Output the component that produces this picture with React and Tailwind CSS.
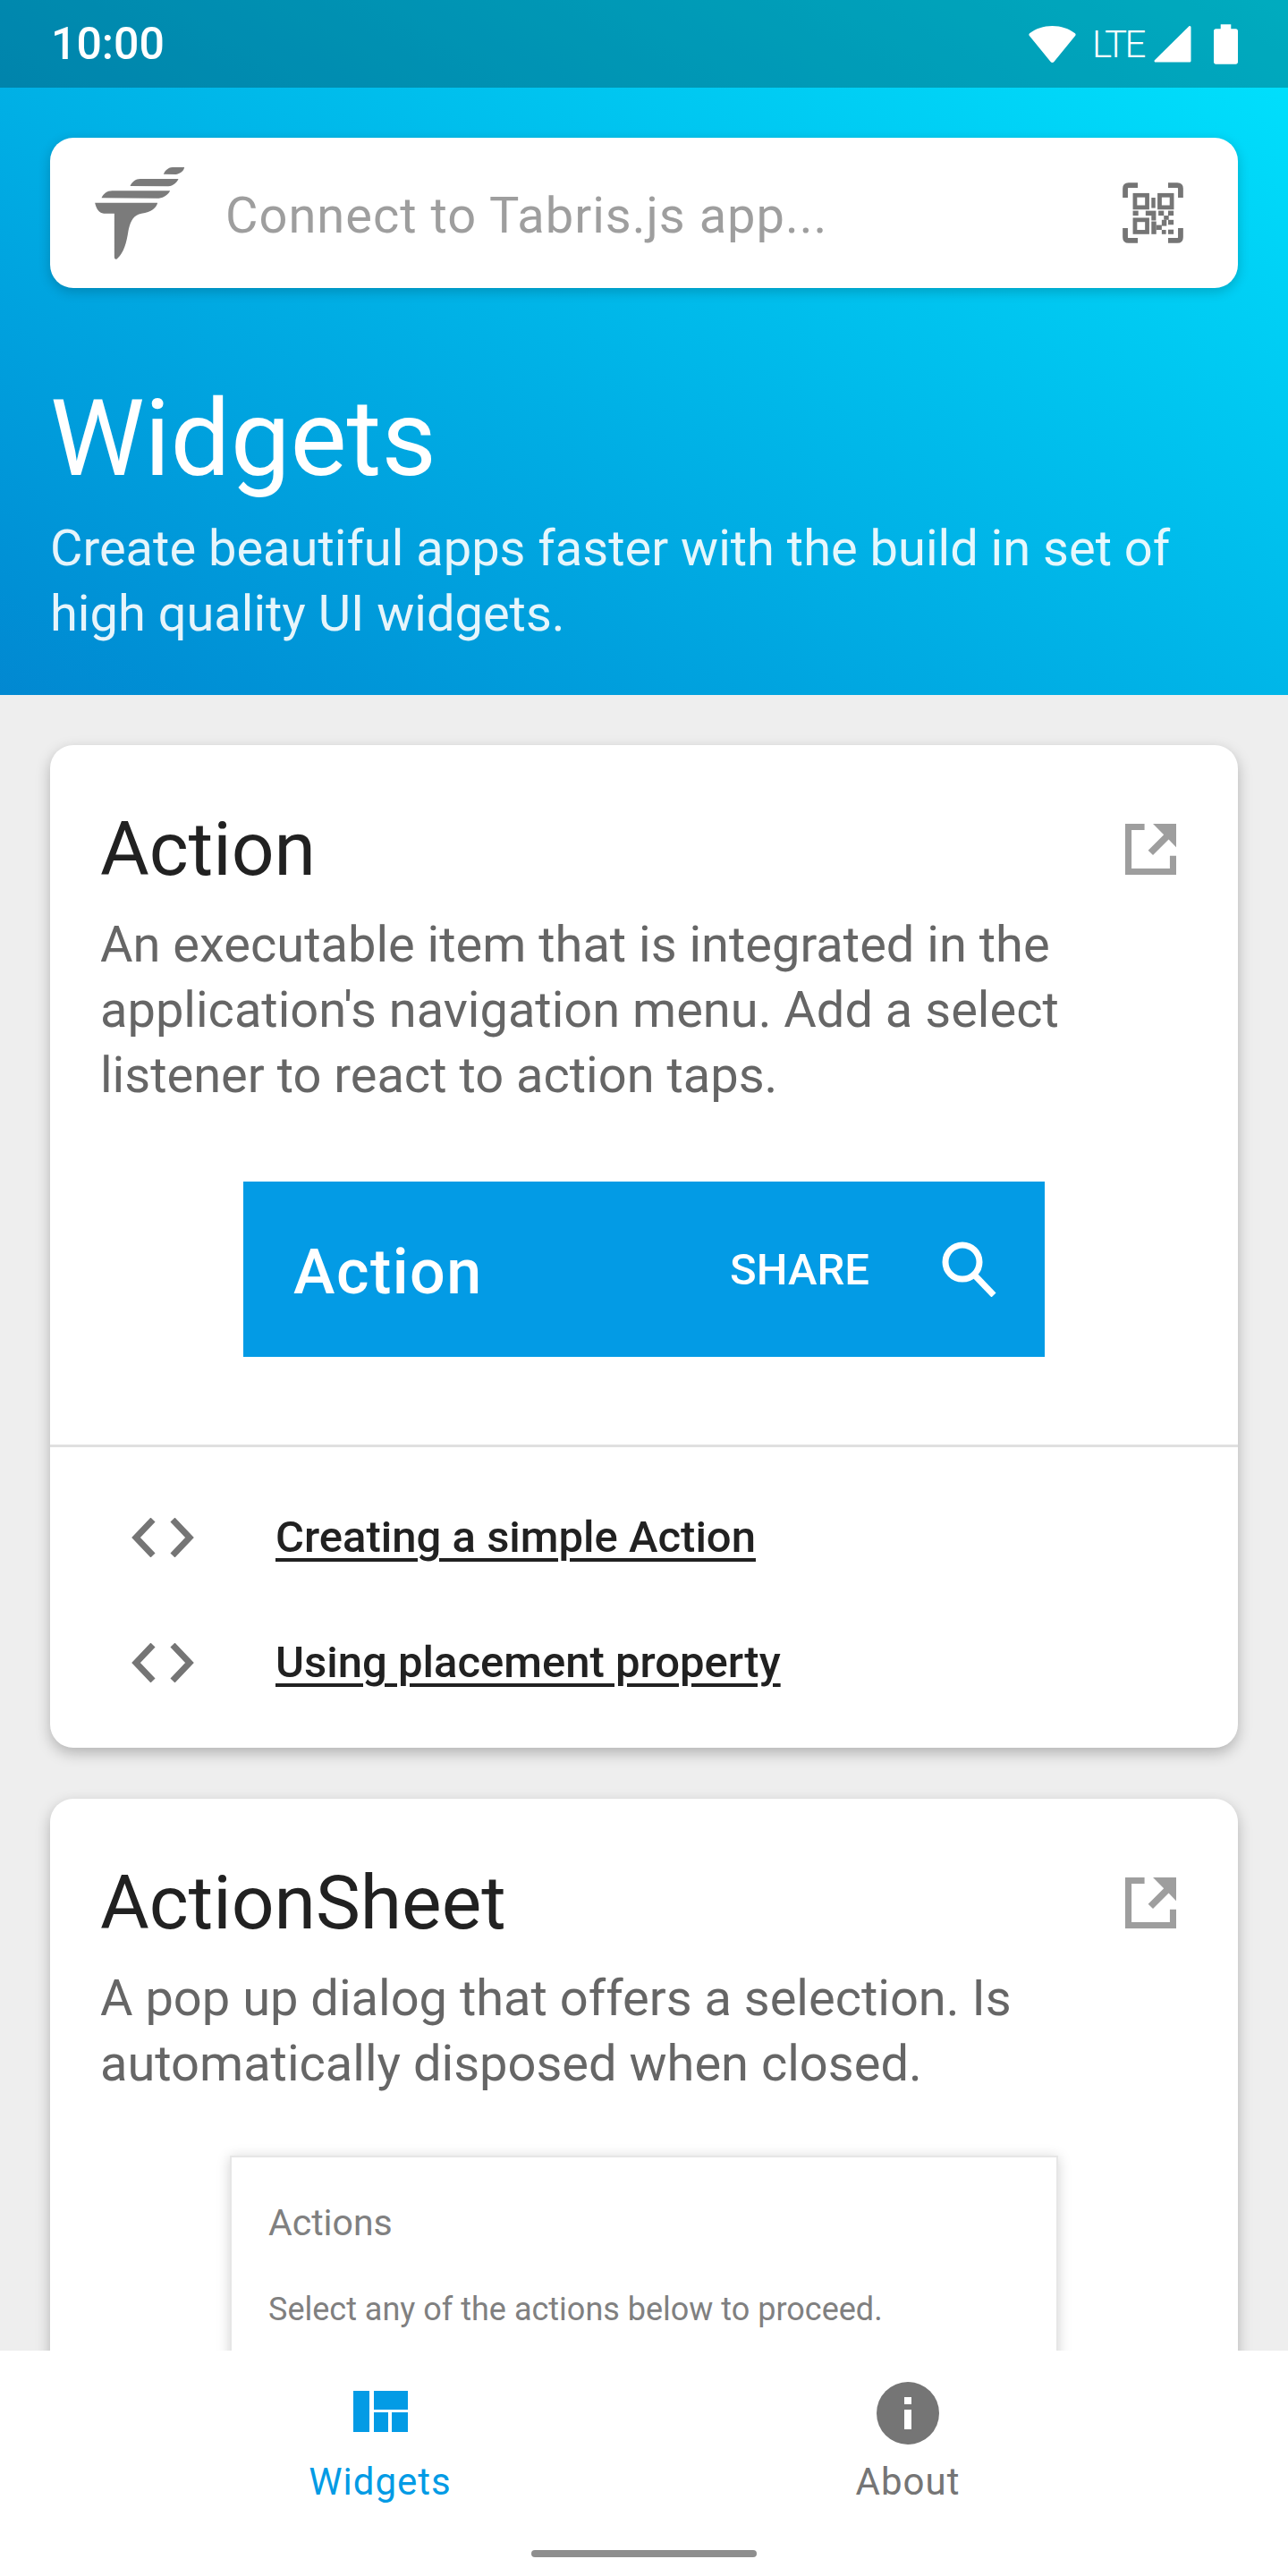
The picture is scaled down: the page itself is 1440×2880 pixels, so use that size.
import React from 'react';

const roboto = "font-['Roboto',sans-serif]";

function Wifi() {
  return (
    <svg width="53" height="43" viewBox="0 0 54 44" className="block">
      <path d="M27 1C17 1 8 4 1 9.500C0 10.500 0 11.500 1 12.500L25 42C26 43.300 28 43.300 29 42L53 12.500C54 11.500 54 10.500 53 9.500C46 4 37 1 27 1Z" fill="#fff" />
    </svg>
  );
}

function Signal() {
  return (
    <svg width="42" height="43" viewBox="0 0 44 44" className="block">
      <path d="M41 1C42.500 0 43.500 1 43.500 2.500V41C43.500 42.500 42.500 43 41.500 43H2.500C0.500 43 0 41.500 1 40.500Z" fill="#fff" />
    </svg>
  );
}

function Battery() {
  return (
    <svg width="27" height="45" viewBox="0 0 28 46" className="block">
      <path d="M8 0H20V5H25.500C27 5 28 6 28 7.500V43.500C28 45 27 46 25.500 46H2.500C1 46 0 45 0 43.500V7.500C0 6 1 5 2.500 5H8Z" fill="#fff" />
    </svg>
  );
}

function Logo() {
  return (
    <svg width="101" height="104" viewBox="140 108 302 312" className="block shrink-0">
      <g fill="#7b7b7b">
        <path d="M370 134C374 124 384 112 400 111H440C438 122 428 132 412 135Z" />
        <path d="M258 174C264 160 276 150 292 150H420C415 162 402 174 386 175Z" />
        <path d="M162 214C168 200 180 190 198 190H392C386 202 372 214 354 215Z" />
        <path d="M140 230H350C346 246 330 262 296 266C270 270 258 292 252 324C246 366 236 398 216 416C210 422 205 420 205 412V266H170C152 264 144 248 140 230Z" />
      </g>
    </svg>
  );
}

function QrIcon() {
  return (
    <svg width="68" height="68" viewBox="0 0 200 200" className="block">
      <g fill="none" stroke="#757575" strokeWidth="17">
        <path d="M9 50V20C9 13 13 9 20 9H50" />
        <path d="M150 9H180C187 9 191 13 191 20V50" />
        <path d="M9 150V180C9 187 13 191 20 191H50" />
        <path d="M150 191H180C187 191 191 187 191 180V150" />
        <rect x="41" y="42" width="40" height="40" strokeWidth="14" />
        <rect x="122" y="42" width="40" height="40" strokeWidth="14" />
        <rect x="41" y="123" width="40" height="40" strokeWidth="14" />
      </g>
      <g fill="#757575">
        <rect x="95" y="50" width="13" height="34" />
        <rect x="34" y="93" width="18" height="16" />
        <rect x="76" y="93" width="34" height="16" />
        <rect x="95" y="109" width="15" height="16" />
        <rect x="118" y="93" width="18" height="16" />
        <rect x="150" y="93" width="18" height="16" />
        <rect x="136" y="109" width="16" height="14" />
        <rect x="95" y="128" width="16" height="42" />
        <rect x="111" y="140" width="18" height="16" />
        <rect x="129" y="123" width="16" height="20" />
        <rect x="150" y="123" width="18" height="16" />
        <rect x="150" y="155" width="18" height="15" />
        <rect x="129" y="156" width="14" height="14" />
      </g>
    </svg>
  );
}

function ExternalIcon() {
  return (
    <svg width="57" height="57" viewBox="0 0 169 169" className="block shrink-0 mb-[2px]">
      <g fill="#9e9e9e">
        <path d="M0 0H64V21H21V148H148V106H169V169H0Z" />
        <path d="M92 0H169V78L144 52L92 104L76 88L128 36Z" />
      </g>
    </svg>
  );
}

function CodeIcon() {
  return (
    <svg width="70" height="44" viewBox="0 0 70 44" className="block">
      <g fill="none" stroke="#757575" strokeWidth="7">
        <path d="M24 2L5 22L24 42" />
        <path d="M46 2L65 22L46 42" />
      </g>
    </svg>
  );
}

function SearchGlyph() {
  return (
    <svg width="62" height="62" viewBox="0 0 62 62" className="block">
      <circle cx="23" cy="23" r="19" fill="none" stroke="#fff" strokeWidth="7" />
      <path d="M36 37L58 60" stroke="#fff" strokeWidth="7" />
    </svg>
  );
}

function WidgetsIcon() {
  return (
    <svg width="61" height="46" viewBox="0 0 61 46" className="block">
      <g fill="#039be5">
        <rect x="0" y="0" width="18" height="46" />
        <rect x="23" y="0" width="38" height="21" />
        <rect x="23" y="24" width="16" height="22" />
        <rect x="43" y="24" width="18" height="22" />
      </g>
    </svg>
  );
}

function InfoIcon() {
  return (
    <svg width="70" height="70" viewBox="0 0 70 70" className="block">
      <circle cx="35" cy="35" r="35" fill="#757575" />
      <rect x="31" y="17" width="8" height="8" fill="#fff" />
      <rect x="31" y="31" width="8" height="22" fill="#fff" />
    </svg>
  );
}

function Card({ title, description, children }) {
  return (
    <div className="shrink-0 mx-14 bg-white rounded-[26px] shadow-[0_6px_16px_rgba(0,0,0,0.25)] overflow-hidden">
      <div className="px-14 pt-[67px]">
        <div className="flex items-center justify-between pr-[13px]">
          <h2 className="text-[84px] leading-[100px] text-[#212121]">{title}</h2>
          <ExternalIcon />
        </div>
        <p className="mt-[20px] text-[56px] leading-[73px] text-[#666666]">{description}</p>
      </div>
      {children}
    </div>
  );
}

function LinkRow({ label }) {
  return (
    <div className="flex items-center h-[140px] pl-[91px]">
      <CodeIcon />
      <span className="ml-[91px] text-[49px] font-medium text-[#212121] underline underline-offset-[7px] decoration-[4px]">{label}</span>
    </div>
  );
}

export default function App() {
  return (
    <div className={`${roboto} w-[1440px] h-[2880px] flex flex-col bg-[#eeeeee] overflow-hidden`}>
      <header className="h-[777px] shrink-0 bg-linear-to-tr from-[#0288d1] to-[#00e5ff] text-white">
        <div className="h-[98px] bg-black/25 flex items-center justify-between pl-[57px] pr-[56px]">
          <span className="text-[50px] font-medium">10:00</span>
          <div className="flex items-center">
            <Wifi />
            <span className="ml-[18px] w-[58px] text-[42px] font-light tracking-[-2.5px]">LTE</span>
            <div className="ml-[11px]"><Signal /></div>
            <div className="ml-[25px]"><Battery /></div>
          </div>
        </div>
        <div className="mt-[56px] mx-14 h-[168px] bg-white rounded-[26px] shadow-[0_4px_14px_rgba(0,0,0,0.2)] flex items-center pl-[50px] pr-[61px]">
          <Logo />
          <span className="ml-[45px] pt-[6px] flex-1 text-[56px] tracking-[1px] text-[#9e9e9e]">Connect to Tabris.js app...</span>
          <QrIcon />
        </div>
        <div className="px-14 mt-[105px]">
          <h1 className="text-[119px] leading-[128px]">Widgets</h1>
          <p className="mt-[22px] text-[56px] leading-[73px] text-white/90">Create beautiful apps faster with the build in set of high quality UI widgets.</p>
        </div>
      </header>

      <main className="flex-1 min-h-0 overflow-hidden pt-14 flex flex-col gap-[57px]">
        <Card title="Action" description="An executable item that is integrated in the application's navigation menu. Add a select listener to react to action taps.">
          <div className="mt-[82px] mx-auto w-[896px] h-[196px] bg-[#039be5] flex items-center text-white pl-[56px] pr-[53px]">
            <span className="text-[70px] font-medium tracking-[1.5px] flex-1 pt-[6px]">Action</span>
            <span className="text-[49px] font-medium pt-[2px]">SHARE</span>
            <div className="ml-[81px]"><SearchGlyph /></div>
          </div>
          <div className="mt-[98px] border-t-[3px] border-[#e0e0e0] pt-[31px] pb-[25px]">
            <LinkRow label="Creating a simple Action" />
            <LinkRow label="Using placement property" />
          </div>
        </Card>
        <Card title="ActionSheet" description="A pop up dialog that offers a selection. Is automatically disposed when closed.">
          <div className="mt-[66px] mx-auto w-[926px] bg-white border-2 border-[#e6e6e6] shadow-[0_2px_14px_rgba(0,0,0,0.18)] px-[41px] pt-[43px] pb-[200px]">
            <div className="text-[41px] text-[#808080]">Actions</div>
            <div className="mt-[38px] text-[36px] text-[#808080]">Select any of the actions below to proceed.</div>
          </div>
        </Card>
      </main>

      <nav className="relative z-10 h-[252px] shrink-0 bg-white">
        <div className="w-[1180px] mx-auto grid grid-cols-2 h-[174px]">
          <div className="flex flex-col items-center pt-[45px]">
            <WidgetsIcon />
            <span className="mt-[24px] text-[42px] tracking-[1px] text-[#039be5]">Widgets</span>
          </div>
          <div className="flex flex-col items-center pt-[35px]">
            <InfoIcon />
            <span className="mt-[10px] text-[42px] tracking-[1px] text-[#757575]">About</span>
          </div>
        </div>
        <div className="mt-[49px] mx-auto w-[252px] h-[8px] rounded-full bg-[#8e8e8e]" />
      </nav>
    </div>
  );
}
